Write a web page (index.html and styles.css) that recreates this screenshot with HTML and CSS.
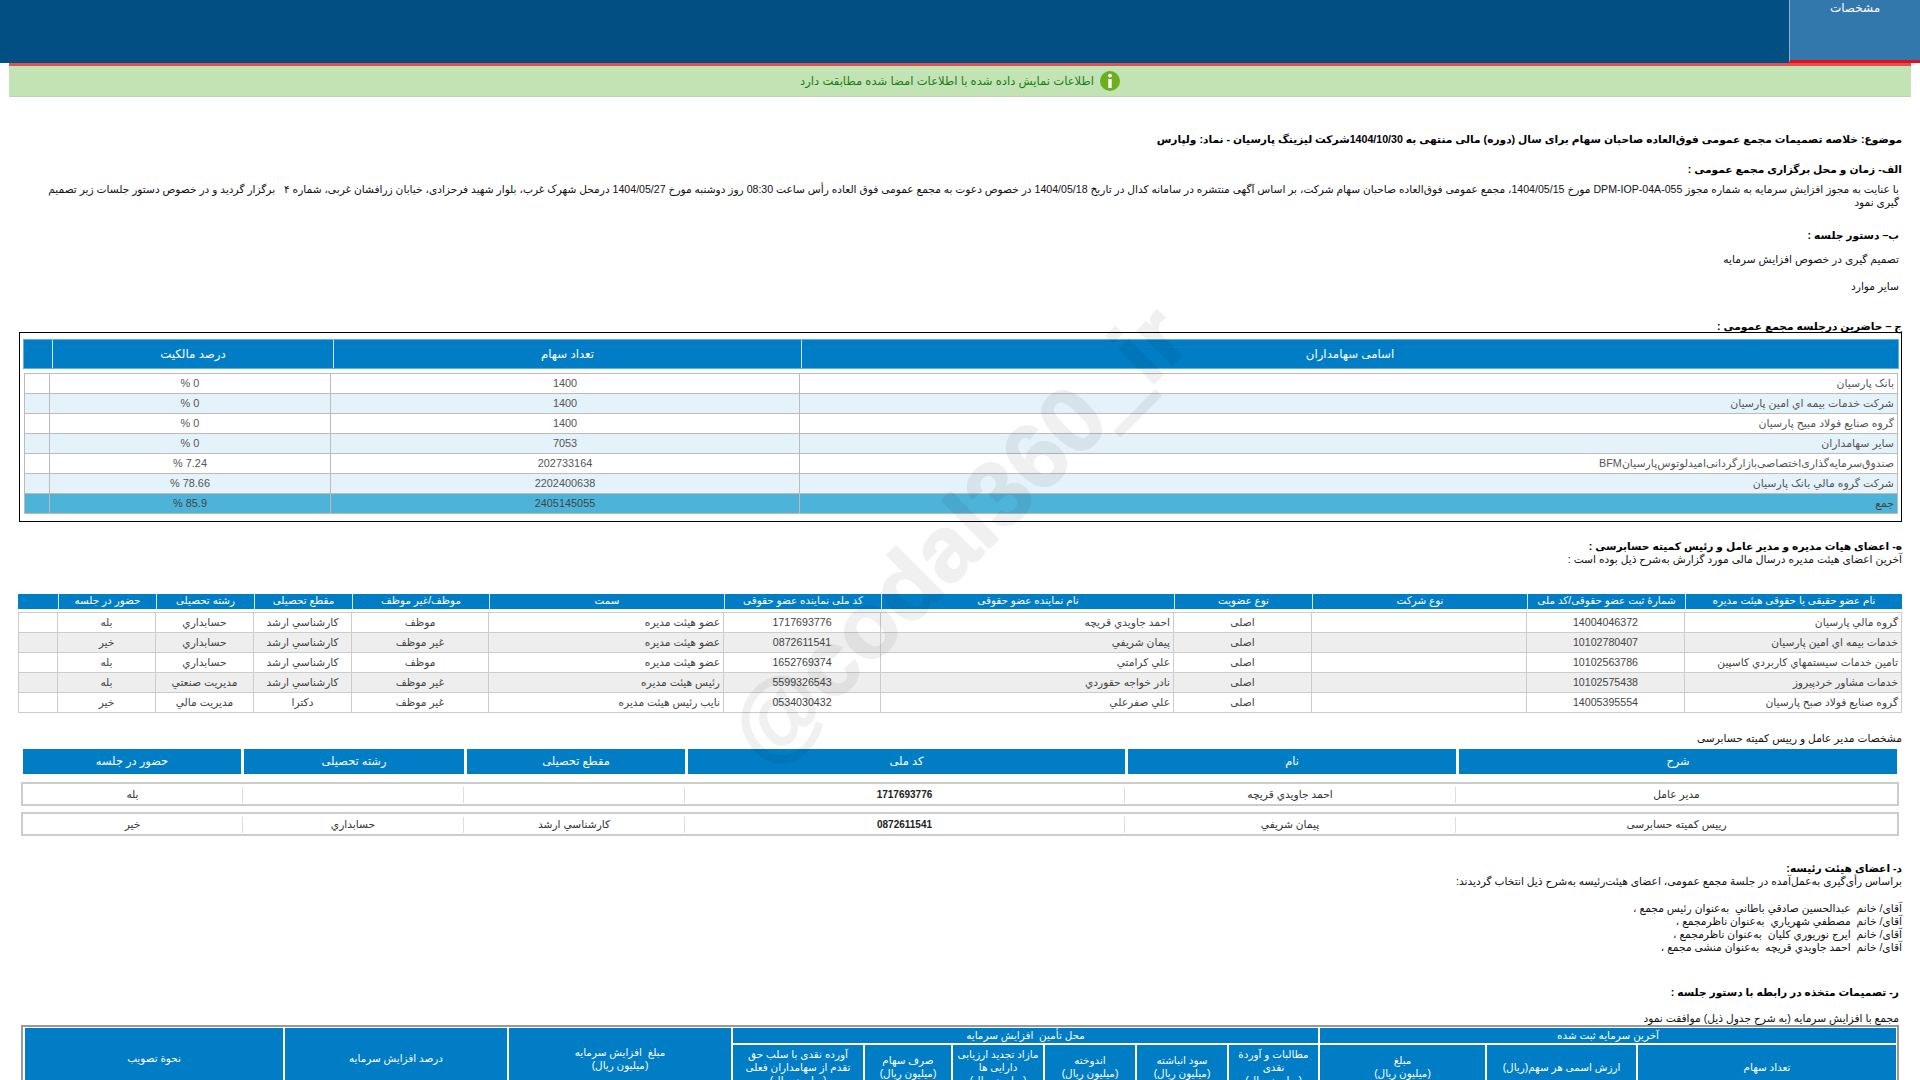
FILE: index.html
```html
<!DOCTYPE html>
<html lang="fa" dir="rtl">
<head>
<meta charset="utf-8">
<title>کدال</title>
<link rel="stylesheet" href="styles.css">
</head>
<body>
<header class="topbar"><div class="tab">مشخصات</div></header>
<div class="notice">
  <svg class="notice-icon" viewBox="0 0 20 20" aria-hidden="true"><circle cx="10" cy="10" r="10" fill="#6cae1c"/><circle cx="10" cy="4.6" r="1.9" fill="#fff"/><path d="M8.3 8h3.4v9H8.3z" fill="#fff"/></svg>
  <span>اطلاعات نمایش داده شده با اطلاعات امضا شده مطابقت دارد</span>
</div>
<main class="content">
  <h1 class="h title">موضوع: خلاصه تصمیمات مجمع عمومی فوق‌العاده صاحبان سهام برای سال (دوره) مالی منتهی به 1404/10/30شرکت لیزینگ پارسیان - نماد: ولپارس</h1>
  <h2 class="h s-alef">الف- زمان و محل برگزاری مجمع عمومی :</h2>
  <p class="para">با عنایت به مجوز افزایش سرمایه به شماره مجوز DPM-IOP-04A-055 مورخ 1404/05/15، مجمع عمومی فوق‌العاده صاحبان سهام شرکت، بر اساس آگهی منتشره در سامانه کدال در تاریخ 1404/05/18 در خصوص دعوت به مجمع عمومی فوق العاده رأس ساعت 08:30 روز دوشنبه مورخ 1404/05/27 درمحل شهرک غرب، بلوار شهید فرحزادی، خیابان زرافشان غربی، شماره ۴ &nbsp; برگزار گردید و در خصوص دستور جلسات زیر تصمیم گیری نمود</p>
  <h2 class="h s-be">ب– دستور جلسه :</h2>
  <p class="agenda a1">تصمیم گیری در خصوص افزایش سرمایه</p>
  <p class="agenda a2">سایر موارد</p>
  <h2 class="h s-jim">ج – حاضرین درجلسه مجمع عمومی :</h2>

  <section class="box">
    <div class="hrow t1h"><div>اسامی سهامداران</div><div>تعداد سهام</div><div>درصد مالکیت</div><div></div></div>
    <div class="t1body">
      <div class="r1"><div class="rt">بانک پارسیان</div><div>1400</div><div>0 %</div><div></div></div>
      <div class="r1 alt"><div class="rt">شرکت خدمات بیمه اي امین پارسیان</div><div>1400</div><div>0 %</div><div></div></div>
      <div class="r1"><div class="rt">گروه صنایع فولاد مبیح پارسیان</div><div>1400</div><div>0 %</div><div></div></div>
      <div class="r1 alt"><div class="rt">سایر سهامداران</div><div>7053</div><div>0 %</div><div></div></div>
      <div class="r1"><div class="rt">صندوق‌سرمایه‌گذاری‌اختصاصی‌بازارگردانی‌امیدلوتوس‌پارسیانBFM</div><div>202733164</div><div>7.24 %</div><div></div></div>
      <div class="r1 alt"><div class="rt">شرکت گروه مالي بانک پارسیان</div><div>2202400638</div><div>78.66 %</div><div></div></div>
      <div class="r1 sum"><div class="rt">جمع</div><div>2405145055</div><div>85.9 %</div><div></div></div>
    </div>
  </section>

  <h2 class="h s-he">ه- اعضای هیات مدیره و مدیر عامل و رئیس کمیته حسابرسی :</h2>
  <p class="sub">آخرین اعضای هیئت مدیره درسال مالی مورد گزارش به‌شرح ذیل بوده است :</p>

  <section class="t2">
    <div class="t2h">
      <div>نام عضو حقیقی یا حقوقی هیئت مدیره</div><div>شمارۀ ثبت عضو حقوقی/کد ملی</div><div>نوع شرکت</div><div>نوع عضویت</div><div>نام نماینده عضو حقوقی</div><div>کد ملی نماینده عضو حقوقی</div><div>سمت</div><div>موظف/غیر موظف</div><div>مقطع تحصیلی</div><div>رشته تحصیلی</div><div>حضور در جلسه</div><div></div>
    </div>
    <div class="t2body">
      <div class="r2"><div class="rt">گروه مالي پارسیان</div><div>14004046372</div><div></div><div>اصلی</div><div class="rt">احمد جاویدي قریچه</div><div>1717693776</div><div class="rt">عضو هیئت مدیره</div><div>موظف</div><div>کارشناسي ارشد</div><div>حسابداري</div><div>بله</div><div></div></div>
      <div class="r2 alt2"><div class="rt">خدمات بیمه اي امین پارسیان</div><div>10102780407</div><div></div><div>اصلی</div><div class="rt">پیمان شریفي</div><div>0872611541</div><div class="rt">عضو هیئت مدیره</div><div>غیر موظف</div><div>کارشناسي ارشد</div><div>حسابداري</div><div>خیر</div><div></div></div>
      <div class="r2"><div class="rt">تامین خدمات سیستمهاي کاربردي کاسپین</div><div>10102563786</div><div></div><div>اصلی</div><div class="rt">علي کرامتي</div><div>1652769374</div><div class="rt">عضو هیئت مدیره</div><div>موظف</div><div>کارشناسي ارشد</div><div>حسابداري</div><div>بله</div><div></div></div>
      <div class="r2 alt2"><div class="rt">خدمات مشاور خردپیروز</div><div>10102575438</div><div></div><div>اصلی</div><div class="rt">نادر خواجه حقوردي</div><div>5599326543</div><div class="rt">رئیس هیئت مدیره</div><div>غیر موظف</div><div>کارشناسي ارشد</div><div>مدیریت صنعتي</div><div>بله</div><div></div></div>
      <div class="r2"><div class="rt">گروه صنایع فولاد صبح پارسیان</div><div>14005395554</div><div></div><div>اصلی</div><div class="rt">علي صفرعلي</div><div>0534030432</div><div class="rt">نایب رئیس هیئت مدیره</div><div>غیر موظف</div><div>دکترا</div><div>مدیریت مالي</div><div>خیر</div><div></div></div>
    </div>
  </section>

  <p class="sub sub-ceo">مشخصات مدیر عامل و رییس کمیته حسابرسی</p>
  <section class="t3">
    <div class="t3h"><div>شرح</div><div>نام</div><div>کد ملی</div><div>مقطع تحصیلی</div><div>رشته تحصیلی</div><div>حضور در جلسه</div></div>
    <div class="r3"><div>مدیر عامل</div><div>احمد جاویدي قریچه</div><div class="num">1717693776</div><div></div><div></div><div>بله</div></div>
    <div class="r3"><div>رییس کمیته حسابرسی</div><div>پیمان شریفي</div><div class="num">0872611541</div><div>کارشناسي ارشد</div><div>حسابداري</div><div>خیر</div></div>
  </section>

  <h2 class="h s-dal">د- اعضای هیئت رئیسه:</h2>
  <p class="sub">براساس رأی‌گیری به‌عمل‌آمده در جلسة مجمع عمومی، اعضای هیئت‌رئیسه به‌شرح ذیل انتخاب گردیدند:</p>
  <ul class="board">
    <li>آقای/ خانم&nbsp; عبدالحسین صادقي باطاني&nbsp; به‌عنوان رئیس مجمع ،</li>
    <li>آقای/ خانم&nbsp; مصطفي شهریاري&nbsp; به‌عنوان ناظرمجمع ،</li>
    <li>آقای/ خانم&nbsp; ایرج نوریوري کلیان&nbsp; به‌عنوان ناظرمجمع ،</li>
    <li>آقای/ خانم&nbsp; احمد جاویدي قریچه&nbsp; به‌عنوان منشی مجمع ،</li>
  </ul>
  <h2 class="h s-re">ر- تصمیمات متخذه در رابطه با دستور جلسه :</h2>
  <p class="approve">مجمع با افزایش سرمایه (به شرح جدول ذیل) موافقت نمود</p>
  <section class="t4">
    <div class="c-last">آخرین سرمایه ثبت شده</div>
    <div class="c-src">محل تأمین&nbsp; افزایش سرمایه</div>
    <div class="c-tall c10">مبلغ&nbsp; افزایش سرمایه<br>(میلیون ریال)</div>
    <div class="c-tall c11">درصد افزایش سرمایه</div>
    <div class="c-tall c12">نحوة تصویب</div>
    <div class="c-sub">تعداد سهام</div>
    <div class="c-sub">ارزش اسمی هر سهم(ریال)</div>
    <div class="c-sub">مبلغ<br>(میلیون ریال)</div>
    <div class="c-sub">مطالبات و آوردة<br>نقدی<br>(میلیون ریال)</div>
    <div class="c-sub">سود انباشته<br>(میلیون ریال)</div>
    <div class="c-sub">اندوخته<br>(میلیون ریال)</div>
    <div class="c-sub">مازاد تجدید ارزیابی<br>دارایی ها<br>(میلیون ریال)</div>
    <div class="c-sub">صرف سهام<br>(میلیون ریال)</div>
    <div class="c-sub">آورده نقدی با سلب حق<br>تقدم از سهامداران فعلی<br>(میلیون ریال)</div>
  </section>
</main>
<div class="watermark" aria-hidden="true">@codal360<span class="wm-us">_</span>ir</div>
</body>
</html>
```

FILE: styles.css
```css
html, body { margin: 0; padding: 0; height: 1080px; overflow: hidden; background: #fff; }
body { position: relative; font-family: "Liberation Sans", "DejaVu Sans", sans-serif; font-size: 10.65px; color: #111; }
* { box-sizing: border-box; }
h1, h2, p, ul { margin: 0; padding: 0; font-size: inherit; }

.topbar { height: 63px; background: #024f84; display: flex; }
.tab { width: 131px; height: 63px; background: #3278ad; border-left: 1px solid #8fb4d0; border-bottom: 3px solid #e30f1a; color: #fff; text-align: center; font-size: 12px; line-height: 17px; }

.notice { margin: 0 9px; height: 34px; background: #c2e3b3; border-top: 3px solid #e0504f; border-bottom: 1px solid #bfcfb8; display: flex; justify-content: center; align-items: center; gap: 6px; color: #1f7a1a; font-size: 11.6px; }
.notice-icon { width: 20px; height: 20px; flex: none; }

.content { padding: 0 18px; }
.h { font-weight: bold; line-height: 14px; color: #000; font-size: 10.65px; }
.title { margin-top: 35px; }
.s-alef { margin-top: 16px; }
.para { margin: 7px 3px 0 22px; line-height: 13px; font-size: 10.6px; }
.s-be { margin: 19px 3px 0 0; }
.agenda { margin-right: 3px; line-height: 14px; }
.a1 { margin-top: 10px; }
.a2 { margin-top: 13px; }
.s-jim { margin: 29px 0 2px; line-height: 8px; }
.sub { line-height: 14px; }

.box { margin-left: 1px; height: 190px; border: 1px solid #000; padding: 6px 2px 8px 3px; }
.hrow { display: grid; grid-template-columns: 1096px 468px 281px 1fr; height: 30px; background: #007dc5; border: 1px solid #5fb0de; color: #fff; line-height: 28px; text-align: center; font-size: 11.8px; }
.hrow > div + div { border-right: 1px solid #cfe6f4; }
.t1body { margin: 4px 1px 0; border-top: 1px solid #bbb; border-left: 1px solid #bbb; border-right: 1px solid #bbb; }
.r1 { display: grid; grid-template-columns: 1097px 469px 281px 1fr; height: 20px; line-height: 19px; border-bottom: 1px solid #bbb; text-align: center; color: #555; background: #fff; font-size: 10.9px; }
.r1 > div + div { border-right: 1px solid #bbb; }
.r1 .rt, .r2 .rt { text-align: right; padding-right: 3px; }
.alt { background: #e4f2f9; }
.sum { background: #4eb3d8; color: #444; }

.s-he { margin: 17px 0 -1px; }

.t2 { margin-top: 28px; }
.t2h, .r2 { display: grid; grid-template-columns: 216px 158px 215px 138px 293px 157px 235px 137px 98px 98px 98px 1fr; text-align: center; }
.t2h { height: 15px; line-height: 14px; background: #007dc5; color: #fff; font-size: 10.4px; white-space: nowrap; }
.t2h > div + div { border-right: 1px solid #cfe6f4; }
.t2body { margin-top: 3px; border-top: 1px solid #ccc; border-left: 1px solid #ccc; border-right: 1px solid #ccc; }
.r2 { height: 20px; line-height: 19px; border-bottom: 1px solid #ccc; background: #fff; color: #444; white-space: nowrap; }
.r2 > div + div { border-right: 1px solid #ccc; }
.alt2 { background: #eee; }

.sub-ceo { margin-top: 18px; }
.t3 { margin: 4px 3px 0; }
.t3h { display: grid; grid-template-columns: 438px 328px 437px 218px 220px 218px; justify-content: space-between; margin: 0 2px; height: 25px; text-align: center; line-height: 24px; color: #fff; font-size: 11.4px; }
.t3h > div { background: #007dc5; }
.r3 { display: grid; grid-template-columns: 441px 331px 440px 221px 221px 1fr; height: 24px; margin-top: 6px; padding: 3px 0 1px; border: 2px solid #ccc; text-align: center; line-height: 15px; color: #333; }
.t3h + .r3 { margin-top: 8px; }
.r3 > div + div { border-right: 1px solid #ddd; }
.num { font-weight: bold; color: #222; font-size: 10px; }

.s-dal { margin: 25px 0 -1px; }
.board { margin-top: 14px; list-style: none; line-height: 13px; }
.s-re { margin: 31px 3px 0 0; }
.approve { margin: 15px 3px 0 0; line-height: 8px; }

.t4 { margin: 3px 3px 0; height: 80px; padding: 1px 1px 0; border: 2px solid #999; display: grid; grid-template-columns: 258px 149px 165px 89px 90px 90px 90px 86px 130px 222px 222px 258px; grid-template-rows: 15px 44px; gap: 2px; color: #fff; font-size: 10.4px; line-height: 13px; text-align: center; }
.t4 > div { background: #007dc5; display: flex; align-items: center; justify-content: center; }
.c-last { grid-column: 1 / span 3; grid-row: 1; }
.c-src { grid-column: 4 / span 6; grid-row: 1; }
.c-tall { grid-row: 1 / span 2; }
.c10 { grid-column: 10; }
.c11 { grid-column: 11; }
.c12 { grid-column: 12; }
.c-sub { grid-row: 2; }

.watermark { position: absolute; left: 958px; top: 535px; transform: translate(-50%, -50%) rotate(-45deg); font-family: "Liberation Sans", sans-serif; font-weight: bold; font-size: 93px; line-height: 1; color: #000; opacity: .055; -webkit-text-stroke: 1.5px #000; white-space: nowrap; pointer-events: none; direction: ltr; }
.wm-us { -webkit-text-stroke-width: 6px; }
```
